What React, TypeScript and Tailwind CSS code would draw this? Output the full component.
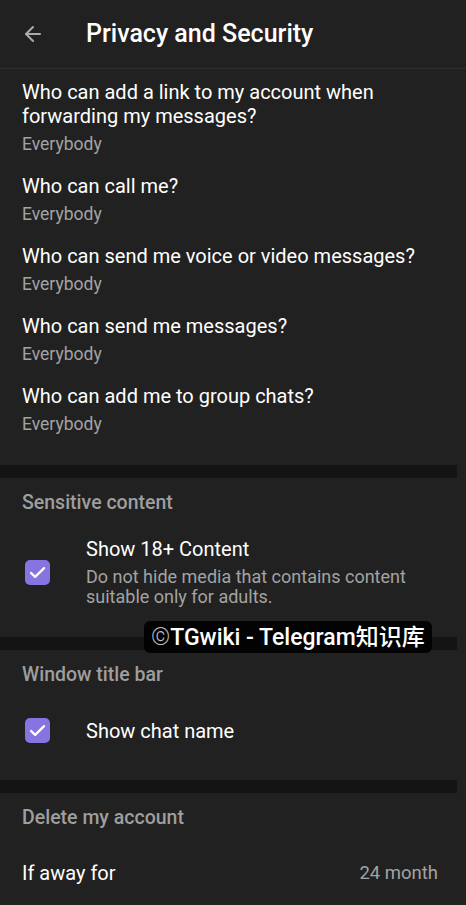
import { ArrowLeft } from "lucide-react";

const privacyItems = [
  "Who can add a link to my account when forwarding my messages?",
  "Who can call me?",
  "Who can send me voice or video messages?",
  "Who can send me messages?",
  "Who can add me to group chats?",
];

function Checkbox() {
  return (
    <div className="w-[25px] h-[25px] rounded-[5px] bg-[#8774e1] flex items-center justify-center shrink-0">
      <svg width="21" height="21" viewBox="0 0 24 24" fill="none">
        <path d="M4.5 12.5l4.8 4.5L19.5 7" stroke="white" strokeWidth="2.6" strokeLinecap="round" strokeLinejoin="round" />
      </svg>
    </div>
  );
}

function Separator() {
  return <div className="h-[13px] bg-[#141414] mr-[9px]" />;
}

function SectionTitle({ children }: { children: string }) {
  return <h2 className="px-[22px] text-[19.5px] leading-6 font-medium text-[#9e9e9e]">{children}</h2>;
}

export default function App() {
  return (
    <div
      className="relative w-[466px] h-[905px] overflow-hidden bg-[#212121] text-white"
      style={{ fontFamily: "Roboto, 'Noto Sans CJK SC', sans-serif" }}
    >
      {/* Header */}
      <header className="h-[69px] flex items-center border-b border-[#303030]">
        <div className="w-[86px] pl-[21px] flex items-center">
          <ArrowLeft size={24} strokeWidth={2} className="text-[#aaaaaa]" />
        </div>
        <h1 className="text-[25px] font-medium">Privacy and Security</h1>
      </header>

      {/* Privacy list */}
      <div className="pt-[2px] pb-[20px]">
        {privacyItems.map((q) => (
          <div key={q} className="pl-[22px] pr-[12px] py-[9px]">
            <p className="text-[20px] leading-6">{q}</p>
            <p className="mt-1 text-[17.5px] leading-6 text-[#a3a3a3]">Everybody</p>
          </div>
        ))}
      </div>

      <Separator />

      {/* Sensitive content */}
      <div className="pt-[13px] pb-[30px]">
        <SectionTitle>Sensitive content</SectionTitle>
        <div className="mt-[22px] flex items-center">
          <div className="w-[86px] pl-[25px] shrink-0">
            <Checkbox />
          </div>
          <div>
            <p className="text-[20px] leading-6">Show 18+ Content</p>
            <p className="mt-[6px] text-[18px] leading-5 text-[#a3a3a3] pr-[24px]">
              Do not hide media that contains content suitable only for adults.
            </p>
          </div>
        </div>
      </div>

      <Separator />

      {/* Window title bar */}
      <div className="pt-[13px] pb-[37px]">
        <SectionTitle>Window title bar</SectionTitle>
        <div className="mt-[31px] flex items-center">
          <div className="w-[86px] pl-[25px] shrink-0">
            <Checkbox />
          </div>
          <p className="text-[20px] leading-6">Show chat name</p>
        </div>
      </div>

      <Separator />

      {/* Delete my account */}
      <div className="pt-[13px]">
        <SectionTitle>Delete my account</SectionTitle>
        <div className="mt-[31px] px-[22px] pr-[28px] flex items-center justify-between">
          <span className="text-[20px] leading-6">If away for</span>
          <span className="text-[18.5px] leading-6 text-[#a3a3a3]">24 month</span>
        </div>
      </div>

      {/* Watermark */}
      <div className="absolute left-[144px] top-[621px] w-[288px] h-[32px] rounded-[6px] bg-black/90 flex items-center pl-[7px]">
        <span className="text-[24px] leading-none font-light text-[#bdbdbd]">©</span>
        <span className="text-[23px] leading-none font-medium text-white">TGwiki - Telegram知识库</span>
      </div>
    </div>
  );
}
